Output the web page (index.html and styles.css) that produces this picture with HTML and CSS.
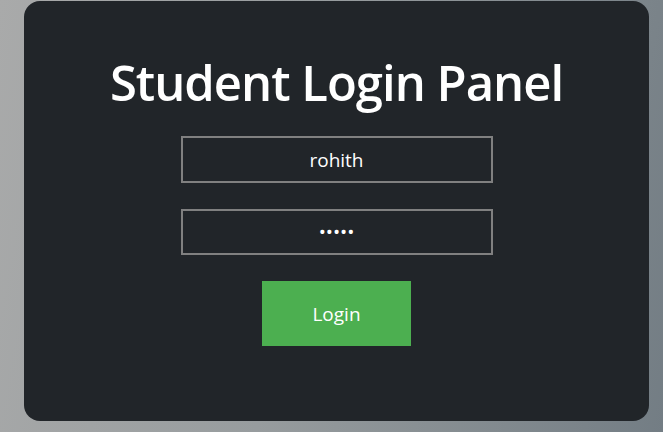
FILE: index.html
```html
<!DOCTYPE html>
<html>
<head>
<meta charset="utf-8">
<link rel="stylesheet" href="styles.css">
</head>
<body>
<div class="page">
  <form class="card">
    <h1 class="title">Student Login Panel</h1>
    <input class="field" type="text" value="rohith">
    <input class="field field-last" type="password" value="rohit">
    <button class="btn" type="button">Login</button>
  </form>
</div>
</body>
</html>
```

FILE: styles.css
```css
html, body {
  margin: 0;
  height: 100%;
}
body {
  background: linear-gradient(100deg, #a9aaaa 0%, #979c9e 45%, #737d84 100%);
  font-family: "Open Sans", "Noto Sans", sans-serif;
  overflow: hidden;
}
.page {
  padding: 1px 14px 0 24px;
}
.card {
  box-sizing: border-box;
  height: 420px;
  background: #212529;
  border-radius: 16px;
  display: flex;
  flex-direction: column;
  align-items: center;
  padding-top: 51px;
  margin: 0;
}
.title {
  margin: 0 0 24px;
  color: #ffffff;
  font-size: 49px;
  font-weight: 600;
  line-height: 60px;
  letter-spacing: -1px;
}
.field {
  box-sizing: border-box;
  width: 312px;
  height: 47px;
  margin: 0 0 26px;
  background: transparent;
  border: 2px solid #808080;
  color: #ffffff;
  text-align: center;
  font-family: "Open Sans", sans-serif;
  font-size: 19px;
  outline: none;
}
.field-last {
  height: 46px;
}
.btn {
  margin-top: 0;
  width: 149px;
  height: 65px;
  background: #4caf50;
  border: none;
  color: #ffffff;
  font-family: "Open Sans", sans-serif;
  font-size: 19px;
}
```
